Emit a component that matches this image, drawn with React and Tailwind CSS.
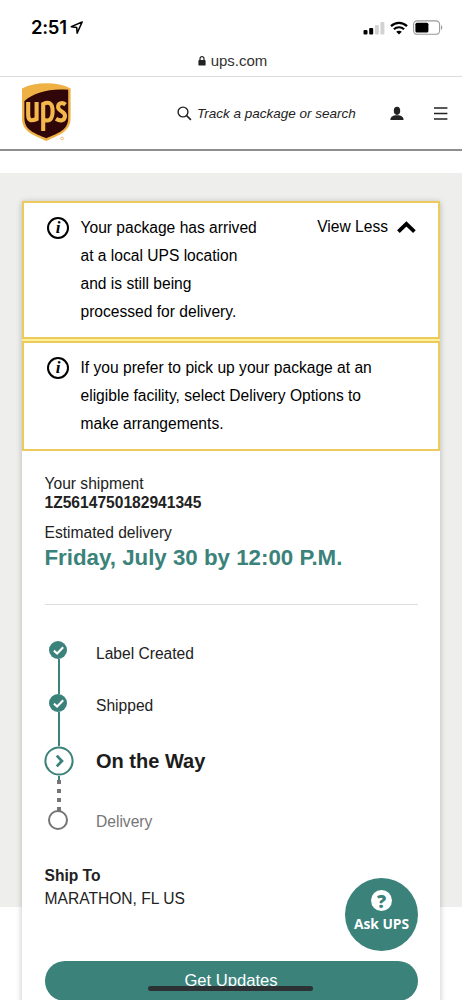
const steps = [
  { label: 'Label Created', state: 'done' },
  { label: 'Shipped', state: 'done' },
  { label: 'On the Way', state: 'current' },
  { label: 'Delivery', state: 'pending' },
];

function StatusBar() {
  return (
    <div className="flex h-[54px] items-start justify-between pl-[31px] pr-[19px] pt-[15px]">
      <div className="flex items-center gap-[3px]">
        <span className="font-['Inter',sans-serif] text-[18.5px] leading-[25px] font-semibold tracking-[-0.3px] text-black">2:51</span>
        <svg width="13" height="13" viewBox="0 0 12 12" fill="none" stroke="#000" strokeWidth="1.4" strokeLinejoin="round">
          <path d="M11.2 0.9 L1.2 5.2 L6.2 6.1 L6.6 11.2 Z" />
        </svg>
      </div>
      <div className="flex items-center gap-[5px] pt-[5px]">
        <svg width="22" height="14" viewBox="0 0 22 14">
          <rect x="0.5" y="9" width="4" height="4.6" rx="1" fill="#000" />
          <rect x="6.2" y="7" width="4" height="6.6" rx="1" fill="#000" />
          <rect x="11.9" y="4" width="4" height="9.6" rx="1" fill="#d2d2d2" />
          <rect x="17.4" y="1" width="4" height="12.6" rx="1" fill="#d2d2d2" />
        </svg>
        <svg width="18" height="14" viewBox="0 0 18 14" fill="none" stroke="#000">
          <path d="M1 5.1 C5.6 0.8 12.4 0.8 17 5.1" strokeWidth="2.3" />
          <path d="M3.9 8.2 C6.8 5.6 11.2 5.6 14.1 8.2" strokeWidth="2.2" />
          <path d="M9 13.6 L6.2 10.7 C7.8 9.3 10.2 9.3 11.8 10.7 Z" fill="#000" stroke="none" />
        </svg>
        <svg width="30" height="15" viewBox="0 0 30 15">
          <rect x="0.6" y="0.9" width="26" height="13.4" rx="3.6" fill="#fff" stroke="#999" strokeWidth="1.1" />
          <rect x="2.4" y="2.7" width="13" height="9.8" rx="1.6" fill="#000" />
          <path d="M28 5.2 C29.7 5.8 29.7 9.2 28 9.8 Z" fill="#999" />
        </svg>
      </div>
    </div>
  );
}

function AddressBar() {
  return (
    <div className="flex h-[23px] items-start justify-center gap-[5px] border-b border-[#dcdcdc] pl-[3px]">
      <svg className="mt-[2px]" width="8" height="10" viewBox="0 0 8 10">
        <rect x="0.4" y="4" width="7.2" height="5.6" rx="0.9" fill="#222" />
        <path d="M2 4.4 V2.7 A2 2 0 0 1 6 2.7 V4.4" fill="none" stroke="#222" strokeWidth="1.2" />
      </svg>
      <span className="text-[15px] leading-[14px] text-[#333]">ups.com</span>
    </div>
  );
}

function UpsLogo() {
  return (
    <svg width="49" height="60" viewBox="0 0 49 60">
      <path d="M0 5.4 C14 -1.4 35 -1.4 48.6 5.4 V35 C48.6 49 37 52 24.3 58 C11.6 52 0 49 0 35 Z" fill="#efb143" />
      <path d="M2.4 18 C13 9 28 5.2 46.2 6.8 V35 C46.2 47.5 36 50 24.3 55.3 C12.6 50 2.4 47.5 2.4 35 Z" fill="#300608" />
      <g fill="none" stroke="#f3b84c" strokeWidth="4.1">
        <path d="M6.2 19 V32 C6.2 38.6 10.5 37.8 14.6 36 V19" />
        <path d="M21.2 48 V21 C26 18.6 30.6 19 30.6 28 C30.6 37.4 26.5 38.6 21.6 36.6" />
        <path d="M43.6 21.6 C40 18.8 36 20.4 36.1 24 C36.2 28.6 43.2 27.8 43 32.9 C42.8 38 38 38.4 34 35.8" />
      </g>
      <circle cx="40" cy="55.5" r="1.4" fill="none" stroke="#efb970" strokeWidth="0.9" />
    </svg>
  );
}

function Header() {
  return (
    <header className="flex h-[74px] items-start border-b-2 border-[#8e8e8e] pl-[22px] pt-[6px]">
      <UpsLogo />
      <svg className="ml-[106px] mt-[23px]" width="15" height="15" viewBox="0 0 15 15" fill="none" stroke="#222" strokeWidth="1.4">
        <circle cx="6" cy="6" r="4.9" />
        <path d="M9.5 9.5 L13.9 13.9" strokeWidth="1.7" />
      </svg>
      <span className="ml-[5px] mt-[21px] w-[160px] text-[13.5px] leading-[20px] whitespace-nowrap text-[#222] italic">Track a package or search</span>
      <svg className="ml-[33px] mt-[23px]" width="14" height="15" viewBox="0 0 14 15" fill="#222">
        <ellipse cx="7" cy="4.8" rx="3.2" ry="4.1" />
        <path d="M0.4 14 C0.4 10.6 2.6 10 5.2 9.2 H8.8 C11.4 10 13.6 10.6 13.6 14 Z" />
      </svg>
      <svg className="ml-[30px] mt-[24px]" width="14" height="13" viewBox="0 0 14 13" stroke="#222" strokeWidth="1.5">
        <path d="M0 1 H13.4 M0 6.5 H13.4 M0 12 H13.4" />
      </svg>
    </header>
  );
}

function InfoIcon() {
  return (
    <span className="mt-[3px] flex h-[22px] w-[22px] shrink-0 items-center justify-center rounded-full border-2 border-black pb-[1px] font-['Liberation_Serif',serif] text-[17px] leading-none font-bold text-black italic">
      i
    </span>
  );
}

function Alert({ lines, className, children }) {
  return (
    <div className={`flex items-start border-2 border-[#eccb5c] bg-white pl-[23px] text-black ${className}`}>
      <InfoIcon />
      <p className="ml-[11.5px] text-[15.6px] leading-[28px] whitespace-nowrap">
        {lines.map((line) => (
          <span key={line} className="block">{line}</span>
        ))}
      </p>
      {children}
    </div>
  );
}

function StepIcon({ state }) {
  if (state === 'done') {
    return (
      <svg width="30" height="18" viewBox="0 0 30 18">
        <circle cx="14" cy="9" r="9" fill="#3a827a" />
        <path d="M9.9 9.6 L13.1 12.5 L19.2 6.2" fill="none" stroke="#fff" strokeWidth="2.1" />
      </svg>
    );
  }
  if (state === 'current') {
    return (
      <svg width="30" height="30" viewBox="0 0 30 30" fill="none" stroke="#3a827a">
        <circle cx="15" cy="15" r="13.6" fill="#fff" strokeWidth="2" />
        <path d="M12.8 9.6 L17.9 15 L12.8 20.4" strokeWidth="2.8" />
      </svg>
    );
  }
  return (
    <svg width="30" height="20" viewBox="0 0 30 20">
      <circle cx="14" cy="10" r="9" fill="#fff" stroke="#757575" strokeWidth="2" />
    </svg>
  );
}

const stepText = {
  done: 'text-[15.6px] text-[#222]',
  current: '-mt-px text-[20px] font-bold text-[#1c1c1c]',
  pending: 'text-[15.6px] text-[#767676]',
};

function Timeline() {
  return (
    <div className="-ml-[0.5px] flex">
      <div className="flex w-[30px] flex-col items-center">
        <StepIcon state="done" />
        <div className="h-[35px] w-[2px] bg-[#3a827a]" />
        <StepIcon state="done" />
        <div className="h-[34px] w-[2px] bg-[#3a827a]" />
        <StepIcon state="current" />
        <div className="h-[4px] w-[2px] bg-[#3a827a]" />
        <div className="flex flex-col gap-[5px]">
          <div className="h-[4px] w-[4px] bg-[#757575]" />
          <div className="h-[4px] w-[4px] bg-[#757575]" />
          <div className="h-[4px] w-[4px] bg-[#757575]" />
          <div className="h-[4px] w-[4px] bg-[#757575]" />
        </div>
        <div className="-mt-[1px]">
          <StepIcon state="pending" />
        </div>
      </div>
      <ul className="ml-[22px] grid grid-rows-[52px_56px_60px_53px] pt-px">
        {steps.map((step) => (
          <li key={step.label} className={`leading-[24px] whitespace-nowrap ${stepText[step.state]}`}>{step.label}</li>
        ))}
      </ul>
    </div>
  );
}

function ShipmentCard() {
  return (
    <div className="mx-[22px] h-[860px] w-[418px] bg-white shadow-[0_1px_6px_rgba(0,0,0,0.24)]">
      <div className="flex flex-col gap-[2px] bg-[#fdf09b]">
        <Alert
          className="h-[138px] pt-[11px]"
          lines={['Your package has arrived', 'at a local UPS location', 'and is still being', 'processed for delivery.']}
        >
          <button className="mt-[3px] mr-[22px] ml-auto flex items-center gap-[9px] text-[15.6px] leading-[20px]">
            View Less
            <svg width="19" height="13" viewBox="0 0 19 13" fill="none" stroke="#000" strokeWidth="3.8">
              <path d="M1.4 10.6 L9.4 2.8 L17.4 10.6" />
            </svg>
          </button>
        </Alert>
        <Alert
          className="h-[110px] pt-[11px]"
          lines={['If you prefer to pick up your package at an', 'eligible facility, select Delivery Options to', 'make arrangements.']}
        />
      </div>

      <div className="px-[22.5px] pt-[23px]">
        <p className="text-[15.6px] leading-[19px]">Your shipment</p>
        <p className="text-[15.6px] leading-[19px] font-bold">1Z5614750182941345</p>
        <p className="mt-[11px] text-[15.6px] leading-[19px]">Estimated delivery</p>
        <h1 className="mt-px text-[22.3px] leading-[29px] font-bold whitespace-nowrap text-[#3a827a]">Friday, July 30 by 12:00 P.M.</h1>
        <hr className="mt-[32px] border-[#dedede]" />
        <div className="pt-[36px]">
          <Timeline />
        </div>
        <h2 className="mt-[2px] text-[15.6px] leading-[22px] font-bold">Ship To</h2>
        <p className="text-[15.6px] leading-[24px]">MARATHON, FL US</p>
        <button className="mt-[50px] block h-[40px] w-[373px] rounded-full bg-[#3a827a] text-[16.6px] text-white">Get Updates</button>
      </div>
    </div>
  );
}

function AskUps() {
  return (
    <button className="absolute top-[878px] left-[345px] flex h-[73px] w-[73px] flex-col items-center rounded-full bg-[#3a827a] pt-[12px] text-white">
      <span className="flex h-[21px] w-[21px] items-center justify-center rounded-full bg-white font-['Open_Sans',sans-serif] text-[18px] leading-none font-extrabold text-[#3a827a]">?</span>
      <span className="mt-[3px] font-['Open_Sans',sans-serif] text-[13.8px] leading-[20px] font-bold whitespace-nowrap">Ask UPS</span>
    </button>
  );
}

export default function App() {
  return (
    <div className="relative h-[1000px] w-[462px] overflow-hidden bg-white font-['Liberation_Sans',Arial,sans-serif] text-[#222]">
      <StatusBar />
      <AddressBar />
      <Header />
      <main className="mt-[22px] h-[734px] bg-[#eeeeed] pt-[28px]">
        <ShipmentCard />
      </main>
      <AskUps />
      {/* home indicator */}
      <div className="absolute top-[986px] left-[148px] h-[5px] w-[165px] rounded-full bg-[#2c3133]" />
    </div>
  );
}
